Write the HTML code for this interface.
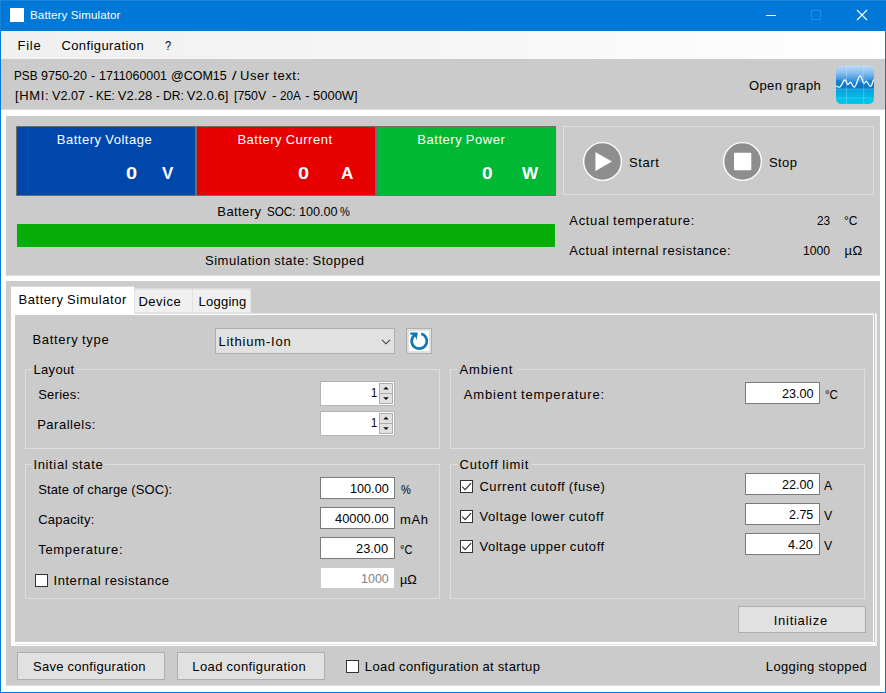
<!DOCTYPE html>
<html><head><meta charset="utf-8"><title>Battery Simulator</title>
<style>
html,body{margin:0;padding:0;}
body{width:886px;height:693px;position:relative;overflow:hidden;background:#fff;font-family:"Liberation Sans",sans-serif;font-size:13px;color:#000;}
body>div,body>svg,body>span{position:absolute;display:block;}
.t{white-space:nowrap;line-height:16px;transform-origin:0 0;}
</style></head><body>
<div style="left:0px;top:0px;width:886px;height:693px;background:#fff;"></div>
<div style="left:0px;top:0px;width:886px;height:31px;background:#0078d7;"></div>
<div style="left:0px;top:0px;width:886px;height:1px;background:#1a85db;"></div>
<div style="left:0px;top:1px;width:1px;height:692px;background:#1a85db;"></div>
<div style="left:0px;top:31px;width:1px;height:662px;background:#0a7ad8;"></div>
<div style="left:885px;top:31px;width:1px;height:662px;background:#0078d7;"></div>
<div style="left:0px;top:692px;width:886px;height:1px;background:#0078d7;"></div>
<div style="left:10px;top:8px;width:14px;height:14px;background:#fff;"></div>
<svg style="left:760px;top:5px" width="120" height="22" viewBox="760 5 120 22"><path d="M766 15.5H776" stroke="#fff" stroke-width="1" fill="none"/><rect x="811.5" y="10.5" width="9" height="9" stroke="#1f8fe6" stroke-width="1" fill="none"/><path d="M857 10L867 20M867 10L857 20" stroke="#fff" stroke-width="1.1" fill="none"/></svg>
<div style="left:1px;top:31px;width:884px;height:28px;background:linear-gradient(90deg,#f0f0f0 0%,#f6f6f6 50%,#ffffff 100%);"></div>
<div style="left:1px;top:59px;width:884px;height:50px;background:#cbcbcb;"></div>
<div style="left:1px;top:109px;width:884px;height:1px;background:#dbdbdb;"></div>
<svg style="left:836px;top:65px" width="39" height="40" viewBox="0 0 39 40">
<defs><linearGradient id="gi" x1="0" y1="0" x2="0" y2="1">
<stop offset="0" stop-color="#c4dcf6"/><stop offset="0.2" stop-color="#86bdee"/><stop offset="0.45" stop-color="#1f86d6"/>
<stop offset="0.56" stop-color="#0a78cc"/><stop offset="0.6" stop-color="#0aa0dc"/><stop offset="0.85" stop-color="#00c0e6"/><stop offset="1" stop-color="#00c8ea"/></linearGradient>
<clipPath id="gc"><rect x="0" y="0.5" width="38" height="38.5" rx="5.5"/></clipPath></defs>
<g clip-path="url(#gc)"><rect x="0" y="0" width="39" height="40" fill="url(#gi)"/>
<path d="M0 24 L0 14 Q19 22 38.5 13 L38.5 24Z" fill="#0a74c8" opacity="0.55"/>
<path d="M10.5 0V40M27.7 0V40" stroke="#fff" stroke-opacity="0.32" stroke-width="0.7"/>
<path d="M0 24H39M0 33H39" stroke="#fff" stroke-opacity="0.25" stroke-width="0.7"/>
<path d="M0 21 C2 22 3 22.6 4 22 C6 21 7 15 8.8 15 C10.5 15 10.8 19.8 11.8 19.6 C13 19.4 13.5 17.2 14.6 17.4 C15.8 17.6 16.8 22.4 18.2 22.2 C20.5 22 22 10.6 24.3 10.8 C26 11 26.6 18.6 28 18.4 C29.2 18.2 29.4 16 30.5 16.3 C32 16.8 32.8 21.6 34.4 21.4 C36.4 21.2 36.4 14.6 38.5 14" stroke="#fff" stroke-width="1.3" fill="none" stroke-linecap="round"/>
</g></svg>
<div style="left:6px;top:116px;width:874px;height:159px;background:#cbcbcb;"></div>
<div style="left:6px;top:275px;width:874px;height:1px;background:#dbdbdb;"></div>
<div style="left:6px;top:281px;width:874px;height:404px;background:#cbcbcb;"></div>
<div style="left:6px;top:685px;width:874px;height:1px;background:#dbdbdb;"></div>
<div style="left:16px;top:126px;width:180px;height:70px;background:#0047ab;box-shadow:inset 0 0 0 1px #6e6e6e;"></div>
<div style="left:196px;top:126px;width:180px;height:70px;background:#e60000;box-shadow:inset 0 0 0 1px #6e6e6e;"></div>
<div style="left:376px;top:126px;width:180px;height:70px;background:#00b833;box-shadow:inset 0 0 0 1px #6e6e6e;"></div>
<div style="left:17px;top:224px;width:538px;height:23px;background:#07ad07;"></div>
<div style="left:563px;top:126px;width:311px;height:69px;box-shadow:inset 0 0 0 1px #dedede;"></div>
<svg style="left:580px;top:139px" width="186" height="46" viewBox="580 139 186 46">
<circle cx="602.55" cy="161.5" r="18.9" fill="#8e8e8e" stroke="#fff" stroke-width="1.4"/>
<path d="M595.6 152.4L611.6 161.5L595.6 170.7Z" fill="#fff" stroke="#fff" stroke-width="0.4" stroke-linejoin="round"/>
<circle cx="742.5" cy="161.5" r="18.9" fill="#8e8e8e" stroke="#fff" stroke-width="1.4"/>
<rect x="734" y="152.8" width="17.3" height="17.4" rx="1" fill="#fff"/></svg>
<div style="left:11px;top:313px;width:863px;height:1px;background:#e0e0e0;"></div>
<div style="left:11px;top:314px;width:863px;height:1px;background:#fff;"></div>
<div style="left:11px;top:314px;width:4px;height:332px;background:#fff;"></div>
<div style="left:11px;top:642px;width:866px;height:4px;background:#fff;"></div>
<div style="left:15px;top:644px;width:859px;height:1px;background:#e6e6e6;"></div>
<div style="left:873px;top:314px;width:1px;height:332px;background:#fff;"></div>
<div style="left:875px;top:313px;width:2px;height:333px;background:#f2f2f2;"></div>
<div style="left:134px;top:288px;width:59px;height:1px;background:#dcdcdc;"></div>
<div style="left:134px;top:289px;width:59px;height:24px;background:#f0f0f0;box-shadow:inset 0 0 0 1px #e2e2e2;"></div>
<div style="left:192px;top:288px;width:59px;height:1px;background:#dcdcdc;"></div>
<div style="left:192px;top:289px;width:59px;height:24px;background:#f0f0f0;box-shadow:inset 0 0 0 1px #e2e2e2;"></div>
<div style="left:11px;top:286px;width:123px;height:1px;background:#e0e0e0;"></div>
<div style="left:11px;top:287px;width:123px;height:28px;background:#fff;"></div>
<div style="left:134px;top:287px;width:1px;height:27px;background:#e2e2e2;"></div>
<div style="left:215px;top:328px;width:180px;height:26px;background:#e1e1e1;box-shadow:inset 0 0 0 1px #adadad;"></div>
<svg style="left:380px;top:337px" width="12" height="10" viewBox="380 337 12 10"><path d="M382 339.8L386 343.8L390 339.8" stroke="#404040" stroke-width="1.1" fill="none"/></svg>
<div style="left:406px;top:328px;width:26px;height:26px;background:#e1e1e1;box-shadow:inset 0 0 0 1px #adadad;"></div>
<div style="left:409px;top:331px;width:20px;height:20px;background:#fff;"></div>
<svg style="left:409px;top:331px" width="20" height="20" viewBox="409 331 20 20">
<path d="M421.28 333.79 A7.55 7.55 0 1 1 414.35 335.27" stroke="#1077b3" stroke-width="2.7" fill="none"/>
<path d="M410.2 332.6L417.9 332.5L416.4 340.2L415.5 337.0L413.2 334.9L410.3 334.6Z" fill="#1077b3"/></svg>
<div style="left:25px;top:369px;width:415px;height:80px;box-shadow:inset 0 0 0 1px #dedede;"></div>
<div style="left:32px;top:369px;width:45px;height:1px;background:#cbcbcb;"></div>
<div style="left:450px;top:369px;width:415px;height:80px;box-shadow:inset 0 0 0 1px #dedede;"></div>
<div style="left:457px;top:369px;width:60px;height:1px;background:#cbcbcb;"></div>
<div style="left:25px;top:464px;width:415px;height:135px;box-shadow:inset 0 0 0 1px #dedede;"></div>
<div style="left:32px;top:464px;width:73px;height:1px;background:#cbcbcb;"></div>
<div style="left:450px;top:464px;width:415px;height:135px;box-shadow:inset 0 0 0 1px #dedede;"></div>
<div style="left:457px;top:464px;width:74px;height:1px;background:#cbcbcb;"></div>
<div style="left:320px;top:381px;width:75px;height:25px;background:#fff;box-shadow:inset 0 0 0 1px #b4b4b4;"></div>
<div style="left:379px;top:383px;width:14px;height:11px;background:#e1e1e1;box-shadow:inset 0 0 0 1px #adadad;"></div>
<div style="left:379px;top:393px;width:14px;height:11px;background:#e1e1e1;box-shadow:inset 0 0 0 1px #adadad;"></div>
<svg style="left:380px;top:381px" width="13" height="25" viewBox="380 381 13 25"><path d="M383.2 389.59999999999997L386 386.7L388.8 389.59999999999997Z M383.2 397.20000000000005L386 400.1L388.8 397.20000000000005Z" fill="#111"/></svg>
<div style="left:320px;top:411px;width:75px;height:25px;background:#fff;box-shadow:inset 0 0 0 1px #b4b4b4;"></div>
<div style="left:379px;top:413px;width:14px;height:11px;background:#e1e1e1;box-shadow:inset 0 0 0 1px #adadad;"></div>
<div style="left:379px;top:423px;width:14px;height:11px;background:#e1e1e1;box-shadow:inset 0 0 0 1px #adadad;"></div>
<svg style="left:380px;top:411px" width="13" height="25" viewBox="380 411 13 25"><path d="M383.2 419.59999999999997L386 416.7L388.8 419.59999999999997Z M383.2 427.20000000000005L386 430.1L388.8 427.20000000000005Z" fill="#111"/></svg>
<div style="left:745px;top:382px;width:75px;height:22px;background:#fff;box-shadow:inset 0 0 0 1px #7a7a7a;"></div>
<div style="left:320px;top:477px;width:75px;height:22px;background:#fff;box-shadow:inset 0 0 0 1px #7a7a7a;"></div>
<div style="left:320px;top:507px;width:75px;height:22px;background:#fff;box-shadow:inset 0 0 0 1px #7a7a7a;"></div>
<div style="left:320px;top:537px;width:75px;height:22px;background:#fff;box-shadow:inset 0 0 0 1px #7a7a7a;"></div>
<div style="left:321px;top:568px;width:73px;height:20px;background:#fff;"></div>
<div style="left:745px;top:473px;width:75px;height:22px;background:#fff;box-shadow:inset 0 0 0 1px #7a7a7a;"></div>
<div style="left:745px;top:503px;width:75px;height:22px;background:#fff;box-shadow:inset 0 0 0 1px #7a7a7a;"></div>
<div style="left:745px;top:533px;width:75px;height:22px;background:#fff;box-shadow:inset 0 0 0 1px #7a7a7a;"></div>
<div style="left:35px;top:574px;width:13px;height:13px;background:#fff;box-shadow:inset 0 0 0 1px #333;"></div>
<div style="left:460px;top:480px;width:13px;height:13px;background:#fff;box-shadow:inset 0 0 0 1px #333;"></div>
<svg style="left:460px;top:480px" width="13" height="13" viewBox="0 0 13 13"><path d="M2.2 6.6L5.1 9.6L11.1 3.2" stroke="#333" stroke-width="1.2" fill="none"/></svg>
<div style="left:460px;top:510px;width:13px;height:13px;background:#fff;box-shadow:inset 0 0 0 1px #333;"></div>
<svg style="left:460px;top:510px" width="13" height="13" viewBox="0 0 13 13"><path d="M2.2 6.6L5.1 9.6L11.1 3.2" stroke="#333" stroke-width="1.2" fill="none"/></svg>
<div style="left:460px;top:540px;width:13px;height:13px;background:#fff;box-shadow:inset 0 0 0 1px #333;"></div>
<svg style="left:460px;top:540px" width="13" height="13" viewBox="0 0 13 13"><path d="M2.2 6.6L5.1 9.6L11.1 3.2" stroke="#333" stroke-width="1.2" fill="none"/></svg>
<div style="left:346px;top:660px;width:13px;height:13px;background:#fff;box-shadow:inset 0 0 0 1px #333;"></div>
<div style="left:738px;top:606px;width:128px;height:27px;background:#e1e1e1;box-shadow:inset 0 0 0 1px #adadad;"></div>
<div style="left:17px;top:652px;width:148px;height:28px;background:#e1e1e1;box-shadow:inset 0 0 0 1px #adadad;"></div>
<div style="left:177px;top:652px;width:148px;height:28px;background:#e1e1e1;box-shadow:inset 0 0 0 1px #adadad;"></div>
<span class="t" style="left:30.00px;top:7.20px;font-size:11.6px;color:#fff;letter-spacing:0.103px;word-spacing:-0.103px;">Battery Simulator</span>
<span class="t" style="left:17.50px;top:38.00px;font-size:13px;letter-spacing:0.761px;">File</span>
<span class="t" style="left:61.40px;top:38.00px;font-size:13px;letter-spacing:0.409px;">Configuration</span>
<span class="t" style="left:165.22px;top:38.00px;font-size:13px;transform:scaleX(0.850);">?</span>
<span class="t" style="left:749.00px;top:78.00px;font-size:13px;letter-spacing:0.383px;word-spacing:-0.383px;">Open graph</span>
<span class="t" style="left:56.80px;top:132.20px;font-size:13px;color:#fff;letter-spacing:0.520px;word-spacing:-0.520px;">Battery Voltage</span>
<span class="t" style="left:126.40px;top:166.20px;font-size:17px;font-weight:700;color:#fff;transform:scaleX(1.178);">0</span>
<span class="t" style="left:162.00px;top:166.20px;font-size:17px;font-weight:700;color:#fff;transform:scaleX(1.000);">V</span>
<span class="t" style="left:237.40px;top:132.20px;font-size:13px;color:#fff;letter-spacing:0.498px;word-spacing:-0.498px;">Battery Current</span>
<span class="t" style="left:298.00px;top:166.20px;font-size:17px;font-weight:700;color:#fff;transform:scaleX(1.167);">0</span>
<span class="t" style="left:341.20px;top:166.20px;font-size:17px;font-weight:700;color:#fff;transform:scaleX(1.008);">A</span>
<span class="t" style="left:417.30px;top:132.20px;font-size:13px;color:#fff;letter-spacing:0.535px;word-spacing:-0.535px;">Battery Power</span>
<span class="t" style="left:481.60px;top:166.20px;font-size:17px;font-weight:700;color:#fff;transform:scaleX(1.122);">0</span>
<span class="t" style="left:522.30px;top:166.20px;font-size:17px;font-weight:700;color:#fff;transform:scaleX(1.006);">W</span>
<span class="t" style="left:205.10px;top:253.20px;font-size:13px;letter-spacing:0.486px;word-spacing:-0.486px;">Simulation state: Stopped</span>
<span class="t" style="left:629.10px;top:155.00px;font-size:13px;letter-spacing:0.565px;">Start</span>
<span class="t" style="left:769.00px;top:155.00px;font-size:13px;letter-spacing:0.396px;">Stop</span>
<span class="t" style="left:569.30px;top:213.00px;font-size:13px;letter-spacing:0.680px;word-spacing:-0.680px;">Actual temperature:</span>
<span class="t" style="left:569.30px;top:243.00px;font-size:13px;letter-spacing:0.523px;word-spacing:-0.523px;">Actual internal resistance:</span>
<span class="t" style="left:817.30px;top:213.00px;font-size:13px;transform:scaleX(0.9136);">23</span>
<span class="t" style="left:844.40px;top:213.00px;font-size:13px;transform:scaleX(0.9226);">°C</span>
<span class="t" style="left:803.40px;top:243.00px;font-size:13px;transform:scaleX(0.9376);">1000</span>
<span class="t" style="left:844.40px;top:243.00px;font-size:13px;letter-spacing:0.610px;">µΩ</span>
<span class="t" style="left:18.60px;top:292.40px;font-size:13px;letter-spacing:0.528px;word-spacing:-0.528px;">Battery Simulator</span>
<span class="t" style="left:138.50px;top:293.70px;font-size:13px;letter-spacing:0.479px;">Device</span>
<span class="t" style="left:198.60px;top:293.70px;font-size:13px;letter-spacing:0.244px;">Logging</span>
<span class="t" style="left:32.40px;top:332.10px;font-size:13px;letter-spacing:0.696px;word-spacing:-0.696px;">Battery type</span>
<span class="t" style="left:218.40px;top:334.10px;font-size:13px;letter-spacing:0.802px;">Lithium-Ion</span>
<span class="t" style="left:33.40px;top:362.20px;font-size:13px;letter-spacing:0.356px;">Layout</span>
<span class="t" style="left:38.20px;top:386.90px;font-size:13px;letter-spacing:0.259px;">Series:</span>
<span class="t" style="left:37.20px;top:416.80px;font-size:13px;letter-spacing:0.516px;">Parallels:</span>
<span class="t" style="left:370.60px;top:385.20px;font-size:13px;transform:scaleX(0.857);">1</span>
<span class="t" style="left:370.60px;top:415.20px;font-size:13px;transform:scaleX(0.857);">1</span>
<span class="t" style="left:459.60px;top:362.20px;font-size:13px;letter-spacing:0.837px;">Ambient</span>
<span class="t" style="left:463.70px;top:386.90px;font-size:13px;letter-spacing:0.862px;word-spacing:-0.862px;">Ambient temperature:</span>
<span class="t" style="left:781.60px;top:386.10px;font-size:13px;transform:scaleX(0.9721);">23.00</span>
<span class="t" style="left:824.80px;top:386.50px;font-size:13px;transform:scaleX(0.8874);">°C</span>
<span class="t" style="left:33.40px;top:456.90px;font-size:13px;letter-spacing:0.653px;word-spacing:-0.653px;">Initial state</span>
<span class="t" style="left:38.20px;top:482.00px;font-size:13px;letter-spacing:0.099px;word-spacing:-0.099px;">State of charge (SOC):</span>
<span class="t" style="left:38.20px;top:512.20px;font-size:13px;letter-spacing:0.240px;">Capacity:</span>
<span class="t" style="left:38.20px;top:542.30px;font-size:13px;letter-spacing:0.702px;">Temperature:</span>
<span class="t" style="left:53.50px;top:573.00px;font-size:13px;letter-spacing:0.548px;word-spacing:-0.548px;">Internal resistance</span>
<span class="t" style="left:349.80px;top:481.30px;font-size:13px;transform:scaleX(0.9739);">100.00</span>
<span class="t" style="left:400.55px;top:482.00px;font-size:13px;transform:scaleX(0.850);">%</span>
<span class="t" style="left:335.00px;top:511.40px;font-size:13px;transform:scaleX(0.9872);">40000.00</span>
<span class="t" style="left:400.10px;top:512.00px;font-size:13px;letter-spacing:0.550px;">mAh</span>
<span class="t" style="left:356.40px;top:541.00px;font-size:13px;transform:scaleX(0.9876);">23.00</span>
<span class="t" style="left:400.10px;top:542.00px;font-size:13px;transform:scaleX(0.8522);">°C</span>
<span class="t" style="left:360.70px;top:570.70px;font-size:13px;color:#838383;transform:scaleX(0.9620);">1000</span>
<span class="t" style="left:400.10px;top:572.00px;font-size:13px;transform:scaleX(0.9777);">µΩ</span>
<span class="t" style="left:459.60px;top:456.90px;font-size:13px;letter-spacing:0.755px;word-spacing:-0.755px;">Cutoff limit</span>
<span class="t" style="left:479.40px;top:478.80px;font-size:13px;letter-spacing:0.565px;word-spacing:-0.565px;">Current cutoff (fuse)</span>
<span class="t" style="left:479.40px;top:509.00px;font-size:13px;letter-spacing:0.646px;word-spacing:-0.646px;">Voltage lower cutoff</span>
<span class="t" style="left:479.40px;top:538.80px;font-size:13px;letter-spacing:0.553px;word-spacing:-0.553px;">Voltage upper cutoff</span>
<span class="t" style="left:781.60px;top:477.00px;font-size:13px;transform:scaleX(0.9721);">22.00</span>
<span class="t" style="left:824.30px;top:477.50px;font-size:13px;transform:scaleX(0.944);">A</span>
<span class="t" style="left:788.90px;top:507.10px;font-size:13px;transform:scaleX(0.9612);">2.75</span>
<span class="t" style="left:824.30px;top:507.50px;font-size:13px;transform:scaleX(0.944);">V</span>
<span class="t" style="left:788.40px;top:536.80px;font-size:13px;transform:scaleX(0.9812);">4.20</span>
<span class="t" style="left:824.30px;top:537.50px;font-size:13px;transform:scaleX(0.944);">V</span>
<span class="t" style="left:773.80px;top:612.60px;font-size:13px;letter-spacing:0.707px;">Initialize</span>
<span class="t" style="left:33.00px;top:658.50px;font-size:13px;letter-spacing:0.303px;word-spacing:-0.303px;">Save configuration</span>
<span class="t" style="left:192.30px;top:658.60px;font-size:13px;letter-spacing:0.397px;word-spacing:-0.397px;">Load configuration</span>
<span class="t" style="left:364.80px;top:658.60px;font-size:13px;letter-spacing:0.414px;word-spacing:-0.414px;">Load configuration at startup</span>
<span class="t" style="left:765.80px;top:659.00px;font-size:13px;letter-spacing:0.368px;word-spacing:-0.368px;">Logging stopped</span>
<span class="t" style="left:217.30px;top:203.80px;font-size:13px;letter-spacing:0.419px;">Battery</span>
<span class="t" style="left:266.50px;top:203.80px;font-size:13px;transform:scaleX(0.8983);">SOC:</span>
<span class="t" style="left:299.00px;top:203.80px;font-size:13px;transform:scaleX(0.9714);">100.00</span>
<span class="t" style="left:340.40px;top:203.80px;font-size:13px;transform:scaleX(0.850);">%</span>
<span class="t" style="left:14.00px;top:68.10px;font-size:13px;transform:scaleX(0.9038);">PSB</span>
<span class="t" style="left:40.90px;top:68.10px;font-size:13px;transform:scaleX(0.9625);">9750-20</span>
<span class="t" style="left:90.60px;top:68.10px;font-size:13px;transform:scaleX(0.925);">-</span>
<span class="t" style="left:98.70px;top:68.10px;font-size:13px;transform:scaleX(0.9521);">1711060001</span>
<span class="t" style="left:171.34px;top:68.10px;font-size:13px;transform:scaleX(0.9603);">@COM15</span>
<span class="t" style="left:231.70px;top:68.10px;font-size:13px;transform:scaleX(1.250);">/</span>
<span class="t" style="left:14.90px;top:88.20px;font-size:13px;letter-spacing:0.640px;">[HMI:</span>
<span class="t" style="left:51.80px;top:88.20px;font-size:13px;transform:scaleX(0.9691);">V2.07</span>
<span class="t" style="left:88.50px;top:88.20px;font-size:13px;transform:scaleX(0.975);">-</span>
<span class="t" style="left:96.11px;top:88.20px;font-size:13px;transform:scaleX(0.8893);">KE:</span>
<span class="t" style="left:117.80px;top:88.20px;font-size:13px;letter-spacing:0.139px;">V2.28</span>
<span class="t" style="left:156.40px;top:88.20px;font-size:13px;transform:scaleX(0.850);">-</span>
<span class="t" style="left:163.17px;top:88.20px;font-size:13px;transform:scaleX(0.9289);">DR:</span>
<span class="t" style="left:186.80px;top:88.20px;font-size:13px;letter-spacing:0.069px;">V2.0.6]</span>
<span class="t" style="left:234.30px;top:88.20px;font-size:13px;transform:scaleX(0.9475);">[750V</span>
<span class="t" style="left:271.60px;top:88.20px;font-size:13px;transform:scaleX(1.025);">-</span>
<span class="t" style="left:279.90px;top:88.20px;font-size:13px;transform:scaleX(0.8994);">20A</span>
<span class="t" style="left:305.30px;top:88.20px;font-size:13px;transform:scaleX(1.000);">-</span>
<span class="t" style="left:313.40px;top:88.20px;font-size:13px;transform:scaleX(0.9980);">5000W]</span>
<span class="t" style="left:240.10px;top:68.10px;font-size:13px;letter-spacing:0.536px;word-spacing:-0.536px;">User text:</span>
</body></html>
